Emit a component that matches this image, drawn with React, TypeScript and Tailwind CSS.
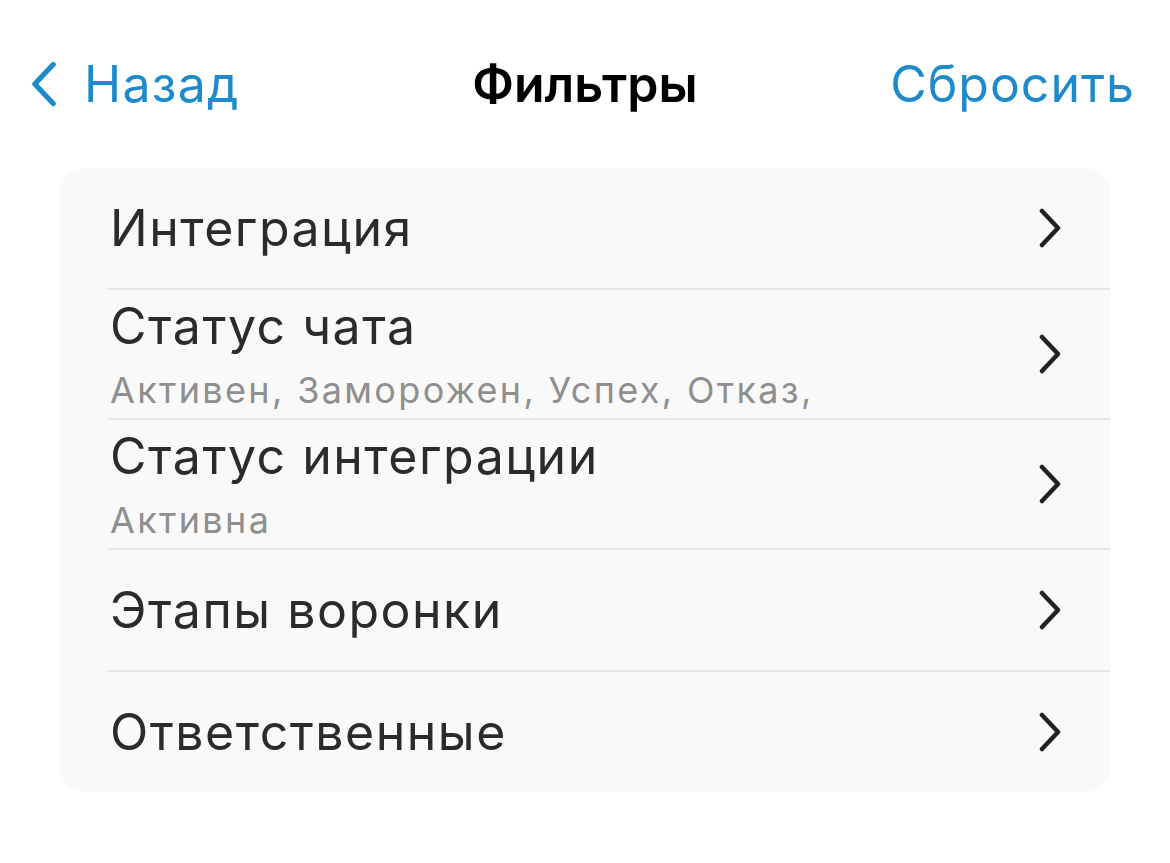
import React from 'react';

type Filter = { title: string; value?: string };

const filters: Filter[] = [
  { title: 'Интеграция' },
  { title: 'Статус чата', value: 'Активен, Заморожен, Успех, Отказ,' },
  { title: 'Статус интеграции', value: 'Активна' },
  { title: 'Этапы воронки' },
  { title: 'Ответственные' },
];

function Chevron({ dir = 'right', className = '' }: { dir?: 'left' | 'right'; className?: string }) {
  return (
    <svg viewBox="0 0 24 40" className={className} fill="none" stroke="currentColor" strokeWidth={4.5} strokeLinecap="round" strokeLinejoin="round">
      {dir === 'right' ? <path d="M4 3 L20 20 L4 37" /> : <path d="M20 3 L4 20 L20 37" />}
    </svg>
  );
}

export default function App() {
  return (
    <div className="min-h-[863px] bg-white font-['Inter',sans-serif] text-[#2b2b2b]">
      <div className="grid h-[168px] grid-cols-[1fr_auto_1fr] items-center">
        <button className="flex items-center gap-[26px] pl-[30px] text-[#1e8acb]">
          <Chevron dir="left" className="h-[46px] w-[28px]" />
          <span className="text-[50px] leading-none tracking-[0.025em]">Назад</span>
        </button>
        <h1 className="text-[50px] font-semibold leading-none text-black">Фильтры</h1>
        <button className="justify-self-end pr-[35px] text-[50px] leading-none tracking-[0.02em] text-[#1e8acb]">
          Сбросить
        </button>
      </div>

      <div className="mx-[60px] overflow-hidden rounded-[24px] bg-[#f9f9f9]">
        {filters.map((f, i) => {
          const last = i === filters.length - 1;
          return (
            <div key={f.title} className="pl-[48px]">
              <div
                className={`flex items-center pr-[48px] pl-[2px] ${
                  f.value ? 'h-[130px]' : last ? 'h-[120px]' : 'h-[122px]'
                } ${last ? '' : 'border-b-2 border-[#e6e6e6]'}`}
              >
                <div className="flex-1">
                  <div className="text-[50px] leading-[60px] tracking-[0.03em]">{f.title}</div>
                  {f.value && (
                    <div className="mt-[12px] text-[36px] leading-[44px] tracking-[0.065em] text-[#8f8f8f]">
                      {f.value}
                    </div>
                  )}
                </div>
                <Chevron className="h-[40px] w-[24px] text-[#222]" />
              </div>
            </div>
          );
        })}
      </div>
    </div>
  );
}
